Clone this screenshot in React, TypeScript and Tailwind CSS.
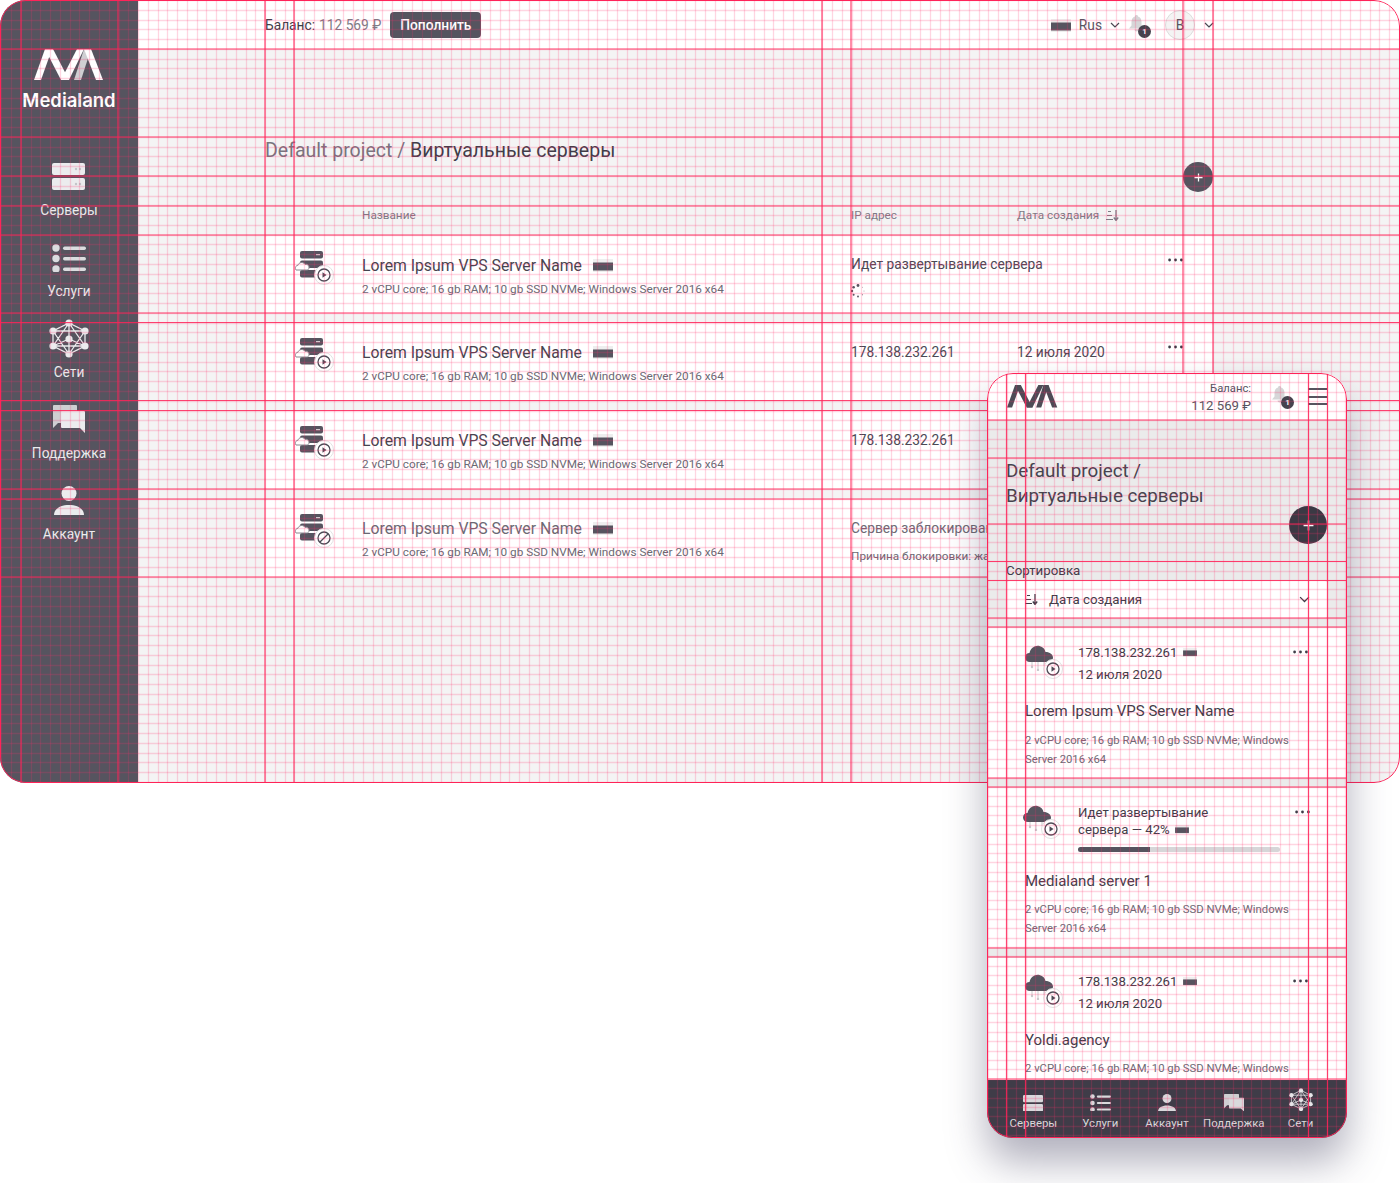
import React from "react";

function GridOverlay({ cell, ox, xs, ys, w, h }: { cell: number; ox: number; xs: number[]; ys: number[]; w: number; h: number }) {
  const fx: number[] = [];
  const fy: number[] = [];
  for (let x = ox; x < w; x += cell) fx.push(Math.round(x) + 0.5);
  for (let y = 0; y < h; y += cell) fy.push(Math.round(y) + 0.5);
  return (
    <svg className="absolute inset-0 pointer-events-none" width={w} height={h}>
      {fx.map((x) => (
        <line key={"fx" + x} x1={x} x2={x} y1={0} y2={h} stroke="#ff2d67" strokeOpacity="0.2" strokeWidth="1.3" />
      ))}
      {fy.map((y) => (
        <line key={"fy" + y} x1={0} x2={w} y1={y} y2={y} stroke="#ff2d67" strokeOpacity="0.2" strokeWidth="1.3" />
      ))}
      {xs.map((x) => (
        <line key={"x" + x} x1={x} x2={x} y1={0} y2={h} stroke="#ff2358" strokeOpacity="0.85" strokeWidth="1.2" />
      ))}
      {ys.map((y) => (
        <line key={"y" + y} x1={0} x2={w} y1={y} y2={y} stroke="#ff2358" strokeOpacity="0.85" strokeWidth="1.2" />
      ))}
    </svg>
  );
}

function Logo({ width, main, alt }: { width: number; main: string; alt: string }) {
  return (
    <svg width={width} viewBox="0 0 70 31" className="block">
      <polygon points="0,31 7,31 18,0 11,0" fill={main} />
      <polygon points="11,0 19,0 35,31 27,31" fill={main} />
      <polygon points="27,31 35,31 50,0 43,0" fill={main} />
      <polygon points="40,31 47,31 57,0 50,0" fill={alt} />
      <polygon points="50,0 57,0 69,31 62,31" fill={main} />
    </svg>
  );
}

function ServersIcon({ c, d, w = 33 }: { c: string; d: string; w?: number }) {
  return (
    <svg width={w} viewBox="0 0 33 27" className="block">
      <rect x="0" y="0" width="33" height="12" rx="2" fill={c} />
      <rect x="0" y="15" width="33" height="12" rx="2" fill={c} />
      <circle cx="24" cy="6" r="1.2" fill={d} />
      <circle cx="28" cy="6" r="1.2" fill={d} />
      <circle cx="24" cy="21" r="1.2" fill={d} />
      <circle cx="28" cy="21" r="1.2" fill={d} />
    </svg>
  );
}

function ServicesIcon({ c, w = 34 }: { c: string; w?: number }) {
  return (
    <svg width={w} viewBox="0 0 34 28" className="block">
      <circle cx="4" cy="4" r="3.7" fill={c} />
      <circle cx="4" cy="14.5" r="3.7" fill={c} />
      <circle cx="4" cy="25" r="3.7" fill={c} />
      <rect x="11" y="2.5" width="23" height="3.4" rx="1.7" fill={c} />
      <rect x="11" y="13" width="23" height="3.4" rx="1.7" fill={c} />
      <rect x="11" y="23.5" width="23" height="3.4" rx="1.7" fill={c} />
    </svg>
  );
}

function NetworkIcon({ c, w = 40 }: { c: string; w?: number }) {
  const pts: [number, number][] = [
    [20, 4],
    [36, 12],
    [36, 27],
    [20, 35],
    [4, 27],
    [4, 12],
    [20, 20],
  ];
  return (
    <svg width={w} viewBox="0 0 40 39" className="block">
      <path
        d="M20 4L36 12L36 27L20 35L4 27L4 12ZM20 4L4 27M20 4L36 27M4 12L36 12M4 12L20 35M36 12L20 35M4 27L36 27M20 4V20M20 20L4 27M20 20L36 27M20 20V35"
        fill="none"
        stroke={c}
        strokeWidth="1.3"
      />
      {pts.map(([x, y]) => (
        <circle key={x + "-" + y} cx={x} cy={y} r="3.6" fill={c} />
      ))}
    </svg>
  );
}

function SupportIcon({ a, b, w = 32 }: { a: string; b: string; w?: number }) {
  return (
    <svg width={w} viewBox="0 0 32 28" className="block">
      <path d="M0 1a1 1 0 0 1 1-1h22a1 1 0 0 1 1 1v16a1 1 0 0 1-1 1H5l-5 5z" fill={a} />
      <path d="M8 7a1 1 0 0 1 1-1h22a1 1 0 0 1 1 1v21l-5-5H9a1 1 0 0 1-1-1z" fill={b} />
    </svg>
  );
}

function AccountIcon({ c, w = 30 }: { c: string; w?: number }) {
  return (
    <svg width={w} viewBox="0 0 30 29" className="block">
      <circle cx="15" cy="7.5" r="7.5" fill={c} />
      <path d="M0 29c0-6 6-10 15-10s15 4 15 10z" fill={c} />
    </svg>
  );
}

function Chevron({ c = "#4a4853", w = 10 }: { c?: string; w?: number }) {
  return (
    <svg width={w} viewBox="0 0 10 6" className="block">
      <path d="M1 1l4 4 4-4" fill="none" stroke={c} strokeWidth="1.2" />
    </svg>
  );
}

function Flag({ w = 20, h = 13 }: { w?: number; h?: number }) {
  return (
    <svg width={w} height={h} viewBox="0 0 20 13" className="block shrink-0">
      <rect width="20" height="13" fill="#eeeeee" />
      <rect y="3.5" width="20" height="8" fill="#56545f" />
    </svg>
  );
}

function Dots() {
  return (
    <svg width="15" height="4" viewBox="0 0 15 4" className="block">
      <circle cx="1.6" cy="2" r="1.4" fill="#3f3c48" />
      <circle cx="7.5" cy="2" r="1.4" fill="#3f3c48" />
      <circle cx="13.4" cy="2" r="1.4" fill="#3f3c48" />
    </svg>
  );
}

function SortIcon({ c = "#56545f" }: { c?: string }) {
  return (
    <svg width="13" height="11" viewBox="0 0 13 11" className="block">
      <path d="M2 1.5h3M1 5.5h5M0 9.500h7" stroke={c} strokeWidth="1" />
      <path d="M10 0v9.500M7.800 7.500l2.200 3 2.200-3" fill="none" stroke={c} strokeWidth="1.3" />
    </svg>
  );
}

function Bell() {
  return (
    <div className="relative w-[16px] h-[17px]">
      <svg width="15" height="17" viewBox="0 0 15 17" className="block">
        <path d="M7.500 0c1 0 1.500.7 1.500 1.500C11.500 2.300 12.500 4.500 12.500 7v3.500l2.500 3H0l2.500-3V7C2.500 4.500 3.500 2.300 6 1.500 6 .7 6.500 0 7.500 0z" fill="#d6d6d8" />
        <path d="M5.500 14.500h4a2 2 0 0 1-4 0z" fill="#d6d6d8" />
      </svg>
      <span className="absolute left-[9px] top-[10px] w-[13px] h-[13px] rounded-full bg-[#45434e] text-white text-[8px] font-bold leading-[13px] text-center">1</span>
    </div>
  );
}

function BadgeGlyph({ blocked, left = "left-[19px]" }: { blocked?: boolean; left?: string }) {
  return (
    <span className={`absolute w-[20px] h-[20px] rounded-full bg-white border border-[#e3e3e3] flex items-center justify-center top-[14px] ${left}`}>
      <svg width="14" height="14" viewBox="0 0 14 14" className="block">
        <circle cx="7" cy="7" r="6" fill="none" stroke="#4d4b56" strokeWidth="1.3" />
        {blocked ? <path d="M3 11L11 3" stroke="#4d4b56" strokeWidth="1.3" /> : <path d="M5.500 4.300L9.500 7l-4 2.700z" fill="#4d4b56" />}
      </svg>
    </span>
  );
}

function ServerGlyph({ blocked }: { blocked?: boolean }) {
  return (
    <div className="relative w-[38px] h-[34px]">
      <svg width="30" height="27" viewBox="0 0 30 27" className="block">
        <rect x="5" y="0" width="23" height="7.500" rx="2" fill="#56545f" />
        <rect x="5" y="9.500" width="23" height="7.500" rx="2" fill="#56545f" />
        <rect x="5" y="19" width="23" height="7.500" rx="2" fill="#56545f" />
        <path d="M21 3.700h4" stroke="#eee" strokeWidth="1" />
        <path d="M1 19c-1.500-2-.3-4.500 2-4.700.6-3 5-4 7-1 2.400-.5 4.300 1 4 3.700-.1 1.200-1 2-2.200 2z" fill="#fff" stroke="#8a8890" strokeWidth="1" />
      </svg>
      <BadgeGlyph blocked={blocked} />
    </div>
  );
}

function CloudGlyph() {
  return (
    <div className="relative w-[38px] h-[34px]">
      <svg width="28" height="26" viewBox="0 0 28 26" className="block">
        <path d="M5 17c-3 0-5-2-5-4.500S2 8 4.500 8C5.500 3 10 0 14.500 1 18 1.800 20 4.500 20.500 7 25 7 28 9.500 28 12.500S25.500 17 23 17z" fill="#56545f" />
        <path d="M7 17v4M13 17v7M19 17v4" stroke="#c9c9cc" strokeWidth="1" />
        <circle cx="7" cy="22" r="1.200" fill="#c9c9cc" />
        <circle cx="13" cy="25" r="1.200" fill="#c9c9cc" />
      </svg>
      <BadgeGlyph left="left-[18px]" />
    </div>
  );
}

function Spinner() {
  const dots = [
    [7, 1.5, 1.4],
    [2.6, 3.2, 1.3],
    [1, 7, 1.2],
    [2.6, 10.8, 1],
    [7, 12.5, 0.9],
    [11.4, 10.8, 0.5],
    [13, 7, 0.4],
    [11.4, 3.2, 0.4],
  ];
  return (
    <svg width="14" height="14" viewBox="0 0 14 14" className="block">
      {dots.map(([x, y, r]) => (
        <circle key={x + "-" + y} cx={x} cy={y} r={r} fill="#56545f" />
      ))}
    </svg>
  );
}

function Plus({ size }: { size: number }) {
  return (
    <svg width={size} height={size} viewBox="0 0 10 10" className="block">
      <path d="M5 .5v9M.5 5h9" stroke="#fff" strokeWidth="1.4" />
    </svg>
  );
}

const sideItems = [
  { label: "Серверы", mb: "mb-[12px]", icon: <ServersIcon c="#ececee" d="#c3c3c8" /> },
  { label: "Услуги", mb: "mb-[11px]", icon: <ServicesIcon c="#dcdcdf" /> },
  { label: "Сети", mb: "mb-[6px]", icon: <NetworkIcon c="#ececee" /> },
  { label: "Поддержка", mb: "mb-[12px]", icon: <SupportIcon a="#cfcfd2" b="#ececee" /> },
  { label: "Аккаунт", mb: "mb-[11px]", icon: <AccountIcon c="#ececee" /> },
];

const rows = [
  {
    top: "mt-0",
    third: (
      <div className="col-span-2 flex flex-col">
        <span className="text-[13.75px] leading-[16px] mt-[20px] text-[#4a4853]">Идет развертывание сервера</span>
        <span className="mt-[12px] block"><Spinner /></span>
      </div>
    ),
  },
  {
    top: "mt-[9px]",
    third: (
      <>
        <span className="text-[13.75px] leading-[16px] mt-[21px] text-[#4a4853]">178.138.232.261</span>
        <span className="text-[13.75px] leading-[16px] mt-[21px] text-[#4a4853]">12 июля 2020</span>
      </>
    ),
  },
  {
    top: "mt-[10px]",
    third: (
      <>
        <span className="text-[13.75px] leading-[16px] mt-[21px] text-[#4a4853]">178.138.232.261</span>
        <span className="text-[13.75px] leading-[16px] mt-[21px] text-[#4a4853]">12 июля 2020</span>
      </>
    ),
  },
  {
    top: "mt-[10px]",
    blocked: true,
    third: (
      <div className="col-span-2 flex flex-col">
        <span className="text-[13.75px] leading-[16px] mt-[21px] text-[#6b6973] whitespace-nowrap">Сервер заблокирован</span>
        <span className="text-[11.75px] leading-[14px] mt-[13px] text-[#6b6973] whitespace-nowrap">Причина блокировки: жалоба</span>
      </div>
    ),
  },
];

const phoneCards = [
  { mt: "mt-[10px]", h: "h-[150px]", name: "Lorem Ipsum VPS Server Name", progress: false, nameMt: "mt-[19px]", pt: "pt-[16px]", cloud: "pt-[17px]", dots: "left-[306px] top-[22px]", descMt: "mt-[10px]" },
  { mt: "mt-[10px]", h: "h-[160px]", name: "Medialand server 1", progress: true, nameMt: "mt-[20px]", pt: "pt-[16px]", cloud: "pt-[17px] -ml-[2px]", dots: "left-[308px] top-[22px]", descMt: "mt-[9px]" },
  { mt: "mt-[10px]", h: "h-[160px]", name: "Yoldi.agency", progress: false, nameMt: "mt-[19px]", pt: "pt-[15px]", cloud: "pt-[16px]", dots: "left-[306px] top-[21px]", descMt: "mt-[9px]" },
];

const navItems = [
  { label: "Серверы", icon: <ServersIcon c="#d9d9dc" d="#d9d9dc" w={20} /> },
  { label: "Услуги", icon: <ServicesIcon c="#d9d9dc" w={21} /> },
  { label: "Аккаунт", icon: <AccountIcon c="#d9d9dc" w={18} /> },
  { label: "Поддержка", icon: <SupportIcon a="#cfcfd2" b="#d9d9dc" w={20} /> },
  { label: "Сети", icon: <NetworkIcon c="#e6e6e8" w={24} /> },
];

export default function App() {
  return (
    <div className="relative w-[1400px] h-[1183px] bg-white overflow-hidden font-['Roboto',sans-serif]">
      <div className="relative w-[1400px] h-[783px] rounded-[26px] overflow-hidden flex bg-[#f4f4f4]">
        <aside className="w-[138px] shrink-0 bg-[#56545f] flex flex-col items-center">
          <div className="h-[137px] flex flex-col items-center pt-[49px] w-full">
            <Logo width={70} main="#ffffff" alt="#cfcfd2" />
            <span className="font-['Inter',sans-serif] font-semibold text-[18.5px] leading-[24px] text-white mt-[8px]">Medialand</span>
          </div>
          {sideItems.map((it) => (
            <div key={it.label} className="h-[81px] flex flex-col items-center justify-end">
              <div className={it.mb}>{it.icon}</div>
              <span className="text-[13.75px] leading-[16px] text-[#ececee]">{it.label}</span>
            </div>
          ))}
        </aside>
        <main className="flex-1 flex flex-col">
          <header className="h-[49px] bg-white flex items-center pl-[127px] pr-[186px]">
            <span className="text-[13.75px] text-[#3f3c48] mt-[1px]">Баланс:</span>
            <span className="text-[13.75px] text-[#7d7b85] ml-[4px] mt-[1px]">112 569 ₽</span>
            <button className="ml-[9px] w-[91px] h-[26px] rounded-[4px] bg-[#56545f] text-white text-[13.75px] font-medium mt-[1px]">Пополнить</button>
            <div className="ml-auto flex items-center mt-[1px]">
              <Flag />
              <span className="ml-[8px] text-[13.75px] text-[#56545f]">Rus</span>
              <span className="ml-[8px]"><Chevron /></span>
              <span className="ml-[9px] -mt-[3px]"><Bell /></span>
              <span className="ml-[20px] w-[30px] h-[30px] rounded-full bg-[#f4f4f4] border border-[#dddddd] flex items-center justify-center text-[13.75px] text-[#56545f]">B</span>
              <span className="ml-[9px]"><Chevron /></span>
            </div>
          </header>
          <div className="pl-[127px]">
            <h1 className="mt-[90px] text-[19.5px] leading-[24px] text-[#77757f]">
              Default project / <span className="text-[#3f3c48]">Виртуальные серверы</span>
            </h1>
            <div className="relative w-[948px] h-[73px]">
              <button className="absolute right-[0px] -top-[1px] w-[30px] h-[30px] rounded-full bg-[#56545f] flex items-center justify-center"><Plus size={9} /></button>
              <div className="absolute left-0 bottom-[14px] w-full grid grid-cols-[97px_489px_166px_1fr] text-[11.75px] leading-[14px] text-[#7d7b85]">
                <span />
                <span>Название</span>
                <span>IP адрес</span>
                <span className="flex items-center gap-[7px]">Дата создания <SortIcon c="#7d7b85" /></span>
              </div>
            </div>
            {rows.map((r, i) => (
              <div key={i} className={`relative w-[948px] h-[78px] bg-white grid grid-cols-[97px_489px_166px_1fr] rounded-[3px] ${r.top}`}>
                <div className="pt-[15px] pl-[30px]"><ServerGlyph blocked={r.blocked} /></div>
                <div>
                  <div className="flex items-center mt-[20px]">
                    <span className={`text-[15.75px] leading-[19px] ${r.blocked ? "text-[#6b6973]" : "text-[#45434e]"}`}>Lorem Ipsum VPS Server Name</span>
                    <span className="ml-[11px]"><Flag /></span>
                  </div>
                  <div className="text-[11.75px] leading-[14px] mt-[7px] text-[#6b6973]">2 vCPU core; 16 gb RAM; 10 gb SSD NVMe; Windows Server 2016 x64</div>
                </div>
                {r.third}
                <span className="absolute left-[903px] top-[22px]"><Dots /></span>
              </div>
            ))}
          </div>
        </main>
        <GridOverlay
          cell={9.775}
          ox={1.2}
          w={1400}
          h={783}
          xs={[21, 118, 265, 294, 822, 851, 1183, 1213]}
          ys={[49, 137, 176, 206, 235, 313, 322.5, 400.5, 410.5, 489, 499, 577]}
        />
        <div className="absolute inset-0 rounded-[26px] border border-[#ff2358] pointer-events-none" />
      </div>

      <div className="absolute left-[987px] top-[373px] w-[360px] h-[765px] rounded-[26px] overflow-hidden bg-[#ebebeb] shadow-[0_24px_40px_rgba(60,58,90,0.4)] flex flex-col text-[#3f3c48]">
        <div className="h-[47px] shrink-0 bg-white flex items-center pl-[20px] pr-[20px]">
          <Logo width={51} main="#4d4b56" alt="#4d4b56" />
          <div className="ml-auto text-right mt-[3px]">
            <div className="text-[11.25px] leading-[14px] text-[#56545f]">Баланс:</div>
            <div className="text-[13.2px] leading-[17px] mt-[1px] text-[#56545f]">112 569 ₽</div>
          </div>
          <span className="ml-[21px] -mt-[5px]"><Bell /></span>
          <div className="ml-[20px] w-[19px] flex flex-col gap-[5.5px]">
            <span className="h-[2px] bg-[#56545f]" />
            <span className="h-[2px] bg-[#56545f]" />
            <span className="h-[2px] bg-[#56545f]" />
          </div>
        </div>
        <div className="relative pl-[19px] shrink-0 h-[161px]">
          <div className="pt-[39px] text-[18.8px] leading-[25px] text-[#45434e]">Default project /<br />Виртуальные серверы</div>
          <button className="absolute right-[20px] top-[86px] w-[38px] h-[38px] rounded-full bg-[#3b3944] flex items-center justify-center"><Plus size={11} /></button>
          <div className="absolute left-[19px] top-[143px] text-[13.3px] leading-[16px]">Сортировка</div>
        </div>
        <div className="mx-[19px] h-[37px] shrink-0 bg-white rounded-[4px] flex items-center pl-[19px] pr-[18px]">
          <SortIcon c="#3f3c48" />
          <span className="ml-[11px] text-[13.3px] mt-[1px]">Дата создания</span>
          <span className="ml-auto"><Chevron c="#3f3c48" w={11} /></span>
        </div>
        {phoneCards.map((c, i) => (
          <div key={i} className={`relative shrink-0 bg-white pl-[38px] pr-[50px] ${c.mt} ${c.h}`}>
            <div className="grid grid-cols-[53px_1fr]">
              <div className={c.cloud}><CloudGlyph /></div>
              <div className={c.pt}>
                {c.progress ? (
                  <>
                    <div className="text-[13.2px] leading-[17px]">Идет развертывание</div>
                    <div className="text-[13.2px] leading-[17px] flex items-center gap-[5px]">сервера — 42% <Flag w={14} h={9} /></div>
                    <div className="mt-[9px] w-[202px] h-[5px] rounded-full bg-[#d6d6d8] overflow-hidden"><div className="w-[72px] h-[5px] bg-[#56545f]" /></div>
                  </>
                ) : (
                  <>
                    <div className="text-[13.2px] leading-[17px] flex items-center gap-[6px]">178.138.232.261 <Flag w={14} h={9} /></div>
                    <div className="text-[13.2px] leading-[17px] mt-[5px]">12 июля 2020</div>
                  </>
                )}
              </div>
            </div>
            <div className={`text-[15px] leading-[19px] ${c.nameMt}`}>{c.name}</div>
            <div className={`text-[11.3px] leading-[19px] text-[#6b6973] ${c.descMt}`}>2 vCPU core; 16 gb RAM; 10 gb SSD NVMe; Windows Server 2016 x64</div>
            <span className={`absolute ${c.dots}`}><Dots /></span>
          </div>
        ))}
        <nav className="absolute left-0 right-0 bottom-0 h-[58px] bg-[#3f3c48] grid grid-cols-5 px-[13px]">
          {navItems.map((n) => (
            <div key={n.label} className="flex flex-col items-center justify-end pb-[8px]">
              <div className="mb-[5px]">{n.icon}</div>
              <span className="text-[11.4px] leading-[14px] text-[#d9d9dc] whitespace-nowrap">{n.label}</span>
            </div>
          ))}
        </nav>
        <GridOverlay
          cell={9.41}
          ox={0.9}
          w={360}
          h={765}
          xs={[19.5, 38.5, 321.5, 340.5]}
          ys={[47, 85, 151, 188.5, 207.5, 245, 254, 405, 414, 575, 584, 706]}
        />
        <div className="absolute inset-0 rounded-[26px] border border-[#ff2358] pointer-events-none" />
      </div>
    </div>
  );
}
